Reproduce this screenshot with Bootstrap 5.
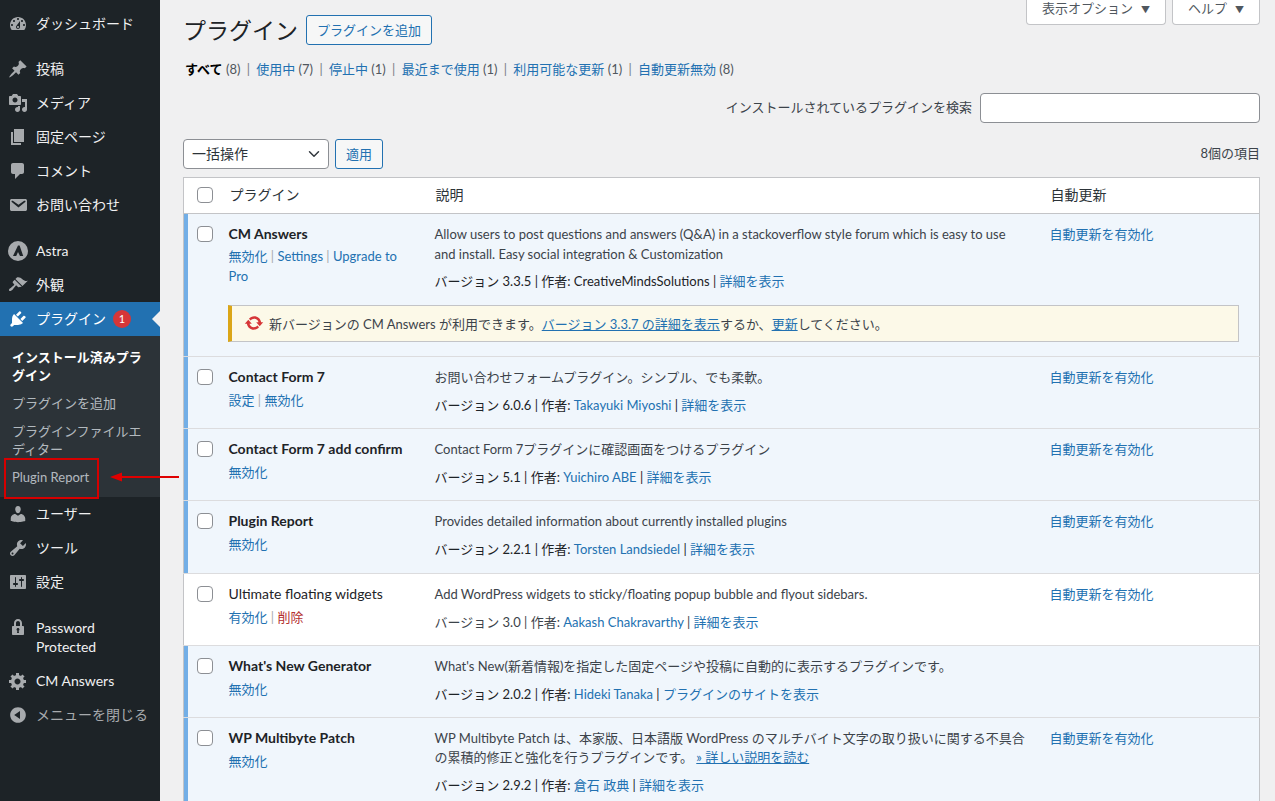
<!DOCTYPE html>
<html lang="ja">
<head>
<meta charset="utf-8">
<title>プラグイン</title>
<link href="https://cdn.jsdelivr.net/npm/bootstrap@5.3.0/dist/css/bootstrap.min.css" rel="stylesheet">
<style>
html,body{height:801px;overflow:hidden}
body{font-family:"Lato","Noto Sans CJK JP",sans-serif;font-size:13px;line-height:1.5;color:#3c434a;background:#f0f0f1;position:relative}
a{color:#2271b1;text-decoration:none}
.wp-side{width:160px;height:801px;background:#1d2327;padding-top:7px;flex:none;position:relative}
.mi{display:flex;align-items:center;height:34px;padding-bottom:1px;color:#f0f0f1;font-size:14px;position:relative;line-height:19px}
.mi svg{width:20px;height:20px;fill:#a7aaad;margin:1px 8px 0;flex:none}
.mi.tall{height:53px;padding-bottom:2px}
.mi.tall svg{align-self:flex-start;margin-top:6px}
.mi.tall span{width:90px}
.gap-sep{margin-top:11px}
.gap-sep2{margin-top:12px}
.mi.cur{background:#2271b1;color:#fff}
.mi.cur svg{fill:#fff}
.mi.cur::after{content:"";position:absolute;right:0;top:9px;border:8px solid transparent;border-right-color:#f0f0f1;border-left-width:0}
.mi.dim{color:#a7aaad}
.bub{width:18px;height:18px;border-radius:50%;background:#d63638;color:#fff;font-size:11px;line-height:18px;text-align:center;margin-left:7px}
.subm{background:#2c3338;padding:7px 0 6px}
.subm a{display:block;padding:5px 12px;font-size:13px;line-height:18px;color:rgba(240,246,252,.7)}
.subm a.now{color:#fff;font-weight:700}
.mark-box{position:absolute;left:4px;top:458px;width:95px;height:41px;border:2px solid #d60000}
.mark-arrow{position:absolute;left:108px;top:470px;width:72px;height:14px}
.wp-main{flex:1;padding:0 15px 0 23px;min-width:0}
.hd h1{font-size:23px;font-weight:400;color:#1d2327;margin:0;line-height:30px}
.hd-left{padding-top:15px;gap:8px}
.btn-wp{height:30px;padding:0 10px;font-size:13px;line-height:28px;color:#2271b1;border:1px solid #2271b1;background:#f6f7f7;border-radius:3px}
.scr{height:25px;padding:0 15px;font-size:13px;line-height:17px;color:#50575e;background:#fff;border:1px solid #c3c4c7;border-top:0;border-radius:0 0 4px 4px;white-space:nowrap}
.scr i{font-style:normal;font-size:9px;margin-left:8px}
.scr-gap{gap:6px}
.flt{margin-top:14px;line-height:20px;padding-left:2px;color:#50575e;white-space:nowrap}
.flt b{color:#000;font-weight:700}
.flt u{text-decoration:none;color:#787c82;margin:0 6.3px}
.srch{margin-top:14px;height:30px}
.srch label{color:#3c434a;margin-right:8px}
.srch .form-control{width:280px;height:30px;min-height:30px;border:1px solid #8c8f94;border-radius:4px;padding:0 8px}
.blk{margin-top:16px;height:30px}
.blk .form-select{width:146px;height:30px;min-height:30px;font-size:14px;line-height:28px;padding:0 24px 0 8px;border:1px solid #8c8f94;border-radius:4px;color:#2c3338;background-color:#fff;background-position:right 6px center}
.blk .btn-wp{width:48px;padding:0;text-align:center;margin-left:6px}
.blk span{margin-left:auto;color:#3c434a}
.ptb{margin:8px 0 0;table-layout:fixed;width:1077px;background:#fff;border:1px solid #c3c4c7;--bs-table-bg:transparent;color:#3c434a}
.ptb>:not(caption)>*>*{border-bottom:1px solid #dcdcde;padding:11px 10px 0;box-shadow:none;vertical-align:top;font-size:13px;line-height:19.5px;color:#3c434a}
.ptb>:not(caption)>*>td:nth-child(3){padding-left:11px}
.ptb>thead>tr>th{height:36px;padding:6px 10px 7px 11px;font-size:14px;font-weight:400;line-height:21px;color:#2c3338;border-bottom:1px solid #c3c4c7}
.ptb>thead>tr>th:nth-child(3){padding-left:12px}
.ptb>thead>tr>th:first-child,.ptb>tbody>tr>td:first-child{padding:12px 0 0 13px}
.ptb>thead>tr>th:first-child{padding-top:9px}
.ptb .form-check-input{width:16px;height:16px;margin:0;display:block;border:1px solid #8c8f94;border-radius:4px;background-color:#fff}
tr.act{background:#f0f6fc}
tr.act>td:first-child{box-shadow:inset 4px 0 0 #72aee6 !important}
.ptb tr.rh{height:72px}
.ptb tr.rh2{height:73px}
.ptb tr.rlast{height:100px}
.ptb tr.top>td{height:81px;border-bottom:0}
.ptb>tbody>tr.ntc>td,.ptb>tbody>tr.ntc>td:first-child{padding:10px 20px 14px 44px}
.pn{color:#1d2327;font-size:14px;margin-top:-1px}
.act .pn{font-weight:700}
.acts{margin-top:4px;line-height:20px}
.top .acts{margin-top:2px}
.acts s{text-decoration:none;color:#a7aaad}
.acts .del{color:#b32d2e}
.ds{margin:0}
.verl{margin-top:9px;color:#3c434a;white-space:nowrap}
.top .verl,.rlast .verl{margin-top:8px}
.act .verl{color:#1d2327}
.nbox{display:flex;align-items:center;height:37px;background:#fcf9e8;border:1px solid #c3c4c7;border-left:4px solid #dba617;padding-left:12px;color:#3c434a}
.nbox svg{width:20px;height:20px;fill:#d63638;margin-right:5px;flex:none}
.nbox span{padding-top:3px}
.nbox a{text-decoration:underline}
</style>
</head>
<body class="d-flex">
<nav class="wp-side">
  <div class="mi"><svg viewBox="0 0 20 20"><path d="M3.76 16h12.48c1.1-1.37 1.76-3.11 1.76-5 0-4.42-3.58-8-8-8s-8 3.58-8 8c0 1.89.66 3.63 1.76 5zM10 4c.55 0 1 .45 1 1s-.45 1-1 1-1-.45-1-1 .45-1 1-1zM6 6c.55 0 1 .45 1 1s-.45 1-1 1-1-.45-1-1 .45-1 1-1zm8 0c.55 0 1 .45 1 1s-.45 1-1 1-1-.45-1-1 .45-1 1-1zm-5.37 5.55L12 7v6c0 1.1-.9 2-2 2s-2-.9-2-2c0-.57.24-1.08.63-1.45zM4 10c.55 0 1 .45 1 1s-.45 1-1 1-1-.45-1-1 .45-1 1-1zm12 0c.55 0 1 .45 1 1s-.45 1-1 1-1-.45-1-1 .45-1 1-1zm-5 3c0-.55-.45-1-1-1s-1 .45-1 1 .45 1 1 1 1-.45 1-1z"/></svg>ダッシュボード</div>
  <div class="mi gap-sep"><svg viewBox="0 0 20 20"><path d="M10.44 3.02l1.82-1.82 6.36 6.35-1.83 1.82c-1.05-.68-2.48-.57-3.41.36l-.75.75c-.92.93-1.04 2.35-.35 3.41l-1.83 1.82-2.41-2.41-2.8 2.79c-.42.42-3.38 2.71-3.8 2.29s1.86-3.39 2.28-3.81l2.79-2.79L4.1 9.36l1.83-1.82c1.05.69 2.48.57 3.4-.36l.75-.75c.93-.92 1.05-2.35.36-3.41z"/></svg>投稿</div>
  <div class="mi"><svg viewBox="0 0 20 20"><path d="M13 11V4c0-.55-.45-1-1-1h-1.67L9 1H5L3.67 3H2c-.55 0-1 .45-1 1v7c0 .55.45 1 1 1h10c.55 0 1-.45 1-1zM7 4.5c1.38 0 2.5 1.12 2.5 2.5S8.38 9.5 7 9.5 4.5 8.38 4.5 7 5.62 4.5 7 4.5zM14 6h5v10.5c0 1.38-1.12 2.5-2.5 2.5S14 17.88 14 16.5s1.12-2.5 2.5-2.5c.17 0 .34.02.5.05V9h-3V6zm-4 8.05V13h2v3.5c0 1.38-1.12 2.5-2.5 2.5S7 17.88 7 16.5 8.12 14 9.5 14c.17 0 .34.02.5.05z"/></svg>メディア</div>
  <div class="mi"><svg viewBox="0 0 20 20"><path d="M6 15V2h10v13H6zm-1 1h8v2H3V5h2v11z"/></svg>固定ページ</div>
  <div class="mi"><svg viewBox="0 0 20 20"><path d="M5 2h9c1.1 0 2 .9 2 2v7c0 1.1-.9 2-2 2h-2l-5 5v-5H5c-1.1 0-2-.9-2-2V4c0-1.1.9-2 2-2z"/></svg>コメント</div>
  <div class="mi"><svg viewBox="0 0 20 20"><path d="M3.87 4h13.25C18.37 4 19 4.59 19 5.79v8.42c0 1.19-.63 1.79-1.88 1.79H3.87c-1.25 0-1.88-.6-1.88-1.79V5.79c0-1.2.63-1.79 1.88-1.79zm6.62 8.6l6.74-5.53c.24-.2.43-.66.13-1.07-.29-.41-.82-.42-1.17-.17l-5.7 3.86L4.8 5.83c-.35-.25-.88-.24-1.17.17-.3.41-.11.87.13 1.07z"/></svg>お問い合わせ</div>
  <div class="mi gap-sep2"><svg viewBox="0 0 20 20"><path fill-rule="evenodd" d="M10 0a10 10 0 1 1 0 20a10 10 0 0 1 0-20zM10 4.5L5 15h3.2L10 11l2 4h3.2L11.6 4.5z"/></svg>Astra</div>
  <div class="mi"><svg viewBox="0 0 20 20"><path d="M14.48 11.06L7.41 3.99l1.5-1.5c.5-.56 2.3-.47 3.51.32 1.21.8 1.43 1.28 2.91 2.1 1.18.64 2.45 1.26 4.45.85zm-.71.71L6.7 4.7 4.93 6.47c-.39.39-.39 1.02 0 1.41l1.06 1.06c.39.39.39 1.03 0 1.42-.6.6-1.43 1.11-2.21 1.69-.35.26-.7.53-1.01.84C1.43 13.23.4 14.89 1.2 15.7c.8.8 2.46-.23 3.8-1.57.31-.31.58-.66.84-1.01.58-.78 1.09-1.61 1.69-2.21.39-.39 1.03-.39 1.42 0l1.06 1.06c.39.39 1.02.39 1.41 0z"/></svg>外観</div>
  <div class="mi cur"><svg viewBox="0 0 20 20"><path d="M13.11 4.36L9.87 7.6 8 5.73l3.24-3.24c.35-.34 1.05-.2 1.56.32.52.51.66 1.21.31 1.55zm-8 1.77l.91-1.12 9.01 9.01-1.19.84c-.71.71-2.63 1.16-3.82 1.16H6.14L4.9 17.26c-.59.59-1.54.59-2.12 0-.59-.58-.59-1.53 0-2.12l1.24-1.24v-3.88c0-1.13.4-3.19 1.09-3.89zm7.26 3.97l3.24-3.24c.34-.35 1.04-.21 1.55.31.52.51.66 1.21.31 1.55l-3.24 3.25z"/></svg>プラグイン<span class="bub">1</span></div>
  <div class="subm">
    <a class="now" href="#">インストール済みプラグイン</a>
    <a href="#">プラグインを追加</a>
    <a href="#">プラグインファイルエディター</a>
    <a href="#">Plugin Report</a>
  </div>
  <div class="mi"><svg viewBox="0 0 20 20"><path d="M10 9.25c-2.27 0-2.73-3.44-2.73-3.44C7 4.02 7.82 2 9.97 2c2.16 0 2.98 2.02 2.71 3.81 0 0-.41 3.44-2.68 3.44zm0 2.57L12.72 10c2.39 0 4.52 2.33 4.52 4.53v2.49s-3.65 1.13-7.24 1.13c-3.65 0-7.24-1.13-7.24-1.13v-2.49c0-2.25 1.94-4.48 4.47-4.48z"/></svg>ユーザー</div>
  <div class="mi"><svg viewBox="0 0 20 20"><path d="M16.68 9.77c-1.34 1.34-3.3 1.67-4.95.99l-5.41 6.52c-.99.99-2.59.99-3.58 0s-.99-2.59 0-3.57l6.52-5.42c-.68-1.65-.35-3.61.99-4.95 1.28-1.28 3.12-1.62 4.72-1.06l-2.89 2.89 2.82 2.82 2.86-2.87c.53 1.58.18 3.39-1.08 4.65zM3.81 16.21c.4.39 1.04.39 1.43 0 .4-.4.4-1.04 0-1.43-.39-.4-1.03-.4-1.43 0-.39.39-.39 1.03 0 1.43z"/></svg>ツール</div>
  <div class="mi"><svg viewBox="0 0 20 20"><path d="M18 16V4c0-.55-.45-1-1-1H3c-.55 0-1 .45-1 1v12c0 .55.45 1 1 1h14c.55 0 1-.45 1-1zM8 11h1c.55 0 1 .45 1 1s-.45 1-1 1H8v1.5c0 .28-.22.5-.5.5s-.5-.22-.5-.5V13H6c-.55 0-1-.45-1-1s.45-1 1-1h1V5.5c0-.28.22-.5.5-.5s.5.22.5.5V11zm5-2h-1c-.55 0-1-.45-1-1s.45-1 1-1h1V5.5c0-.28.22-.5.5-.5s.5.22.5.5V7h1c.55 0 1 .45 1 1s-.45 1-1 1h-1v5.5c0 .28-.22.5-.5.5s-.5-.22-.5-.5V9z"/></svg>設定</div>
  <div class="mi tall gap-sep2"><svg viewBox="0 0 20 20"><path d="M14 9h1c.55 0 1 .45 1 1v7c0 .55-.45 1-1 1H5c-.55 0-1-.45-1-1v-7c0-.55.45-1 1-1h1V6c0-2.21 1.79-4 4-4s4 1.79 4 4v3zm-2 0V6c0-1.1-.9-2-2-2s-2 .9-2 2v3h4zm-1 7l-.36-2.15c.51-.24.86-.75.86-1.35 0-.83-.67-1.5-1.5-1.5s-1.5.67-1.5 1.5c0 .6.35 1.11.86 1.35L9 16h2z"/></svg><span>Password Protected</span></div>
  <div class="mi"><svg viewBox="0 0 20 20"><path d="M18 12h-2.18c-.17.7-.44 1.35-.81 1.93l1.54 1.54-2.1 2.1-1.54-1.54c-.58.36-1.23.63-1.91.79V19H8v-2.18c-.68-.16-1.33-.43-1.91-.79l-1.54 1.54-2.12-2.12 1.54-1.54c-.36-.58-.63-1.23-.79-1.91H1V9.03h2.17c.16-.7.44-1.35.8-1.94L2.43 5.55l2.1-2.1 1.54 1.54c.58-.37 1.24-.64 1.93-.81V2h3v2.18c.68.16 1.33.43 1.91.79l1.54-1.54 2.12 2.12-1.54 1.54c.36.59.64 1.24.8 1.94H18V12zm-8.5 1.5c1.66 0 3-1.34 3-3s-1.34-3-3-3-3 1.34-3 3 1.34 3 3 3z"/></svg>CM Answers</div>
  <div class="mi dim"><svg viewBox="0 0 20 20"><path d="M10 2.16c4.33 0 7.84 3.51 7.84 7.84s-3.51 7.84-7.84 7.84S2.16 14.33 2.16 10 5.71 2.16 10 2.16zm2 11.72V6.12L6.18 9.97z"/></svg>メニューを閉じる</div>
  <div class="mark-box"></div>
</nav>
<svg class="mark-arrow" viewBox="0 0 72 14"><path d="M2 7L14 2.5V6H71V8H14V11.5z" fill="#e00000"/></svg>

<main class="wp-main">
  <div class="hd d-flex justify-content-between align-items-start">
    <div class="d-flex align-items-center hd-left"><h1>プラグイン</h1><a class="btn-wp d-block" href="#">プラグインを追加</a></div>
    <div class="d-flex scr-gap"><div class="scr">表示オプション<i>▼</i></div><div class="scr">ヘルプ<i>▼</i></div></div>
  </div>
  <div class="flt"><b>すべて</b> (8)<u>|</u><a href="#">使用中</a> (7)<u>|</u><a href="#">停止中</a> (1)<u>|</u><a href="#">最近まで使用</a> (1)<u>|</u><a href="#">利用可能な更新</a> (1)<u>|</u><a href="#">自動更新無効</a> (8)</div>
  <div class="srch d-flex justify-content-end align-items-center"><label>インストールされているプラグインを検索</label><input class="form-control" type="search"></div>
  <div class="blk d-flex align-items-center">
    <select class="form-select"><option>一括操作</option></select>
    <a class="btn-wp d-block" href="#">適用</a>
    <span>8個の項目</span>
  </div>
  <table class="table ptb">
    <colgroup><col style="width:35px"><col style="width:205px"><col style="width:616px"><col></colgroup>
    <thead><tr><th><input class="form-check-input" type="checkbox"></th><th>プラグイン</th><th>説明</th><th>自動更新</th></tr></thead>
    <tbody>
      <tr class="act top">
        <td><input class="form-check-input" type="checkbox"></td>
        <td><div class="pn">CM Answers</div><div class="acts"><a href="#">無効化</a> <s>|</s> <a href="#">Settings</a> <s>|</s> <a href="#">Upgrade to Pro</a></div></td>
        <td><p class="ds">Allow users to post questions and answers (Q&amp;A) in a stackoverflow style forum which is easy to use<br>and install. Easy social integration &amp; Customization</p><div class="verl">バージョン 3.3.5 | 作者: CreativeMindsSolutions | <a href="#">詳細を表示</a></div></td>
        <td><a href="#">自動更新を有効化</a></td>
      </tr>
      <tr class="act ntc"><td colspan="4"><div class="nbox"><svg viewBox="0 0 20 20"><path d="M10.2 3.28c3.53 0 6.43 2.61 6.92 6h2.08l-3.5 4-3.5-4h2.32c-.45-1.97-2.21-3.45-4.32-3.45-1.45 0-2.73.71-3.54 1.78L4.95 5.66C6.23 4.2 8.11 3.28 10.2 3.28zm-.4 13.44c-3.52 0-6.43-2.61-6.92-6H.8l3.5-4c1.17 1.33 2.33 2.67 3.5 4H5.48c.45 1.97 2.21 3.45 4.32 3.45 1.45 0 2.73-.71 3.54-1.78l1.71 1.95c-1.28 1.46-3.15 2.38-5.25 2.38z"/></svg><span>新バージョンの CM Answers が利用できます。<a href="#">バージョン 3.3.7 の詳細を表示</a>するか、<a href="#">更新</a>してください。</span></div></td></tr>
      <tr class="act rh">
        <td><input class="form-check-input" type="checkbox"></td>
        <td><div class="pn">Contact Form 7</div><div class="acts"><a href="#">設定</a> <s>|</s> <a href="#">無効化</a></div></td>
        <td><p class="ds">お問い合わせフォームプラグイン。シンプル、でも柔軟。</p><div class="verl">バージョン 6.0.6 | 作者: <a href="#">Takayuki Miyoshi</a> | <a href="#">詳細を表示</a></div></td>
        <td><a href="#">自動更新を有効化</a></td>
      </tr>
      <tr class="act rh">
        <td><input class="form-check-input" type="checkbox"></td>
        <td><div class="pn">Contact Form 7 add confirm</div><div class="acts"><a href="#">無効化</a></div></td>
        <td><p class="ds">Contact Form 7プラグインに確認画面をつけるプラグイン</p><div class="verl">バージョン 5.1 | 作者: <a href="#">Yuichiro ABE</a> | <a href="#">詳細を表示</a></div></td>
        <td><a href="#">自動更新を有効化</a></td>
      </tr>
      <tr class="act rh2">
        <td><input class="form-check-input" type="checkbox"></td>
        <td><div class="pn">Plugin Report</div><div class="acts"><a href="#">無効化</a></div></td>
        <td><p class="ds">Provides detailed information about currently installed plugins</p><div class="verl">バージョン 2.2.1 | 作者: <a href="#">Torsten Landsiedel</a> | <a href="#">詳細を表示</a></div></td>
        <td><a href="#">自動更新を有効化</a></td>
      </tr>
      <tr class="rh">
        <td><input class="form-check-input" type="checkbox"></td>
        <td><div class="pn">Ultimate floating widgets</div><div class="acts"><a href="#">有効化</a> <s>|</s> <a class="del" href="#">削除</a></div></td>
        <td><p class="ds">Add WordPress widgets to sticky/floating popup bubble and flyout sidebars.</p><div class="verl">バージョン 3.0 | 作者: <a href="#">Aakash Chakravarthy</a> | <a href="#">詳細を表示</a></div></td>
        <td><a href="#">自動更新を有効化</a></td>
      </tr>
      <tr class="act rh">
        <td><input class="form-check-input" type="checkbox"></td>
        <td><div class="pn">What's New Generator</div><div class="acts"><a href="#">無効化</a></div></td>
        <td><p class="ds">What's New(新着情報)を指定した固定ページや投稿に自動的に表示するプラグインです。</p><div class="verl">バージョン 2.0.2 | 作者: <a href="#">Hideki Tanaka</a> | <a href="#">プラグインのサイトを表示</a></div></td>
        <td></td>
      </tr>
      <tr class="act rlast">
        <td><input class="form-check-input" type="checkbox"></td>
        <td><div class="pn">WP Multibyte Patch</div><div class="acts"><a href="#">無効化</a></div></td>
        <td><p class="ds">WP Multibyte Patch は、本家版、日本語版 WordPress のマルチバイト文字の取り扱いに関する不具合の累積的修正と強化を行うプラグインです。 <a href="#" class="text-decoration-underline">» 詳しい説明を読む</a></p><div class="verl">バージョン 2.9.2 | 作者: <a href="#">倉石 政典</a> | <a href="#">詳細を表示</a></div></td>
        <td><a href="#">自動更新を有効化</a></td>
      </tr>
    </tbody>
  </table>
</main>
<script src="https://cdn.jsdelivr.net/npm/bootstrap@5.3.0/dist/js/bootstrap.bundle.min.js"></script>
</body>
</html>
